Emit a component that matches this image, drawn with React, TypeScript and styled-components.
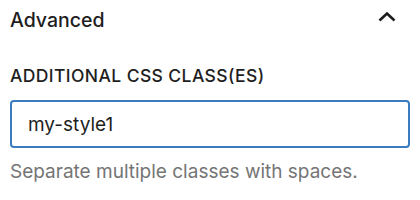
import styled, { createGlobalStyle } from "styled-components";

const GlobalStyle = createGlobalStyle`
    html, body {
        margin: 0;
        padding: 0;
        background: #ffffff;
    }
    body {
        font-family: Inter, "Noto Sans", sans-serif;
        color: #1e1e1e;
    }
`;

const Panel = styled.section`
    width: 420px;
    height: 200px;
    box-sizing: border-box;
    padding: 0 10px;
    background: #ffffff;
`;

const Header = styled.div`
    display: flex;
    align-items: center;
    justify-content: space-between;
    height: 39px;
    padding-right: 14px;
`;

const Title = styled.h2`
    margin: 0;
    font-size: 19.5px;
    line-height: 24px;
    font-weight: 500;
    color: #1e1e1e;
`;

const Body = styled.div`
    padding-top: 27px;
`;

const Label = styled.label`
    display: block;
    font-size: 17.5px;
    font-weight: 500;
    letter-spacing: 0.4px;
    text-transform: uppercase;
    line-height: 20px;
    margin-bottom: 14px;
`;

const Input = styled.input`
    display: block;
    width: 100%;
    height: 48px;
    box-sizing: border-box;
    border: 2px solid #3a7cbd;
    border-radius: 4px;
    padding: 0 16px;
    font-family: Inter, "Noto Sans", sans-serif;
    font-size: 19px;
    color: #1e1e1e;
    outline: none;
`;

const Help = styled.p`
    margin: 12px 0 0;
    font-size: 19px;
    line-height: 24px;
    color: #757575;
`;

function Chevron() {
    return (
        <svg width="18" height="10" viewBox="0 0 18 10" fill="none" style={{ marginBottom: 6 }}>
            <path d="M1.5 8.5 L9 1.5 L16.5 8.5" stroke="#1e1e1e" strokeWidth="2.6" />
        </svg>
    );
}

function App() {
    return (
        <>
            <GlobalStyle />
            <Panel>
                <Header>
                    <Title>Advanced</Title>
                    <Chevron />
                </Header>
                <Body>
                    <Label htmlFor="css-class">Additional CSS class(es)</Label>
                    <Input id="css-class" defaultValue="my-style1" />
                    <Help>Separate multiple classes with spaces.</Help>
                </Body>
            </Panel>
        </>
    );
}

export default App;
